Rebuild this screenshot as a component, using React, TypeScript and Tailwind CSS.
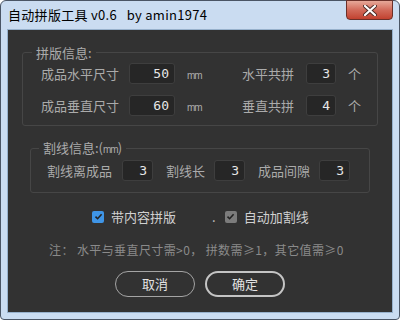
const font = "font-['Noto_Sans_CJK_SC','Noto_Sans',sans-serif]";

function Field({ value, w }: { value: string; w: string }) {
  return (
    <div
      className={`${w} h-[21px] flex items-center justify-end pr-[5px] rounded-[3px] border border-[#3e3e3e] bg-[#262626] text-[13px] text-[#e6e6e6] font-['DejaVu_Sans_Mono',monospace]`}
    >
      {value}
    </div>
  );
}

function Check({ on }: { on: boolean }) {
  return (
    <span
      className={`w-[12px] h-[12px] rounded-[2px] flex items-center justify-center ${
        on ? "bg-[#3f95e6]" : "bg-[#7c7c7c]"
      }`}
    >
      <svg width="9" height="9" viewBox="0 0 9 9">
        <path d="M1.5 4.6 L3.6 6.7 L7.6 2.3" fill="none" stroke="#222" strokeWidth="1.6" />
      </svg>
    </span>
  );
}

// small squeezed "mm" unit, like the bitmap glyph in the dialog
function Mm() {
  return <span className="text-[10px] tracking-[-1px] font-['Liberation_Sans',sans-serif]">mm</span>;
}

export default function App() {
  return (
    <div className={`w-[400px] h-[320px] ${font} bg-[#cadcf1] border border-[#4a5565] rounded-t-[6px] rounded-b-[4px] flex flex-col`}>
      <div className="h-[28px] flex items-center pl-[7px] relative">
        <span className="text-[13px] tracking-[0.3px] text-black whitespace-pre">自动拼版工具 v0.6   by amin1974</span>
        <div className="absolute right-[6px] top-[-1px] w-[47px] h-[20px] rounded-b-[4px] border border-[#6b3029] bg-gradient-to-b from-[#e6a899] via-[#d26a5a] to-[#c2412f] flex items-center justify-center">
          <svg width="14" height="11" viewBox="0 0 14 11">
            <path d="M2 1 L12 10 M12 1 L2 10" stroke="#4a2a26" strokeWidth="4" strokeLinecap="round" />
            <path d="M2 1 L12 10 M12 1 L2 10" stroke="#ffffff" strokeWidth="2.2" strokeLinecap="round" />
          </svg>
        </div>
      </div>
      <div className="mx-[6px] mb-[6px] flex-1 bg-[#323232] border border-[#97b1cc] flex flex-col text-[13px] text-[#ababab]">
        <fieldset className="mx-[14px] mt-[14px] border border-[#464646] rounded-[3px] pb-[9px]">
          <legend className="ml-[9px] px-[4px] leading-[17px]">拼版信息:</legend>
          <div className="flex flex-col gap-[11px] pl-[18px] pr-[16px] pt-[2px]">
            <div className="flex items-center">
              <span className="w-[88px]">成品水平尺寸</span>
              <Field value="50" w="w-[46px]" />
              <span className="ml-[12px]"><Mm /></span>
              <span className="ml-auto mr-[12px]">水平共拼</span>
              <Field value="3" w="w-[30px]" />
              <span className="ml-[12px]">个</span>
            </div>
            <div className="flex items-center">
              <span className="w-[88px]">成品垂直尺寸</span>
              <Field value="60" w="w-[46px]" />
              <span className="ml-[12px]"><Mm /></span>
              <span className="ml-auto mr-[12px]">垂直共拼</span>
              <Field value="4" w="w-[30px]" />
              <span className="ml-[12px]">个</span>
            </div>
          </div>
        </fieldset>
        <fieldset className="mx-[22px] mt-[13px] border border-[#464646] rounded-[3px] pb-[11px]">
          <legend className="ml-[8px] px-[4px] leading-[17px]">割线信息:(<Mm />)</legend>
          <div className="flex items-center pl-[16px] pr-[16px] pt-[2px]">
            <span className="w-[75px]">割线离成品</span>
            <Field value="3" w="w-[31px]" />
            <span className="ml-[13px] w-[48px]">割线长</span>
            <Field value="3" w="w-[31px]" />
            <span className="ml-[13px] w-[61px]">成品间隙</span>
            <Field value="3" w="w-[31px]" />
          </div>
        </fieldset>
        <div className="flex items-center mt-[14px] pl-[84px] text-[#d0d0d0]">
          <Check on />
          <span className="ml-[7px]">带内容拼版</span>
          <span className="ml-[36px] text-[#c8c8c8]">.</span>
          <span className="ml-[9px]"><Check on={false} /></span>
          <span className="ml-[7px]">自动加割线</span>
        </div>
        <div className="mt-[14px] pl-[41px] text-[12px] tracking-[0.4px] text-[#8a8a8a] whitespace-pre">
          注： 水平与垂直尺寸需&gt;0， 拼数需≥1，其它值需≥0
        </div>
        <div className="flex items-center gap-[10px] mt-[12px] pl-[107px] text-[#e2e2e2]">
          <button className="w-[80px] h-[26px] rounded-full border border-[#a4a4a4]">取消</button>
          <button className="w-[80px] h-[26px] rounded-full border-2 border-[#c4c4c4]">确定</button>
        </div>
      </div>
    </div>
  );
}
